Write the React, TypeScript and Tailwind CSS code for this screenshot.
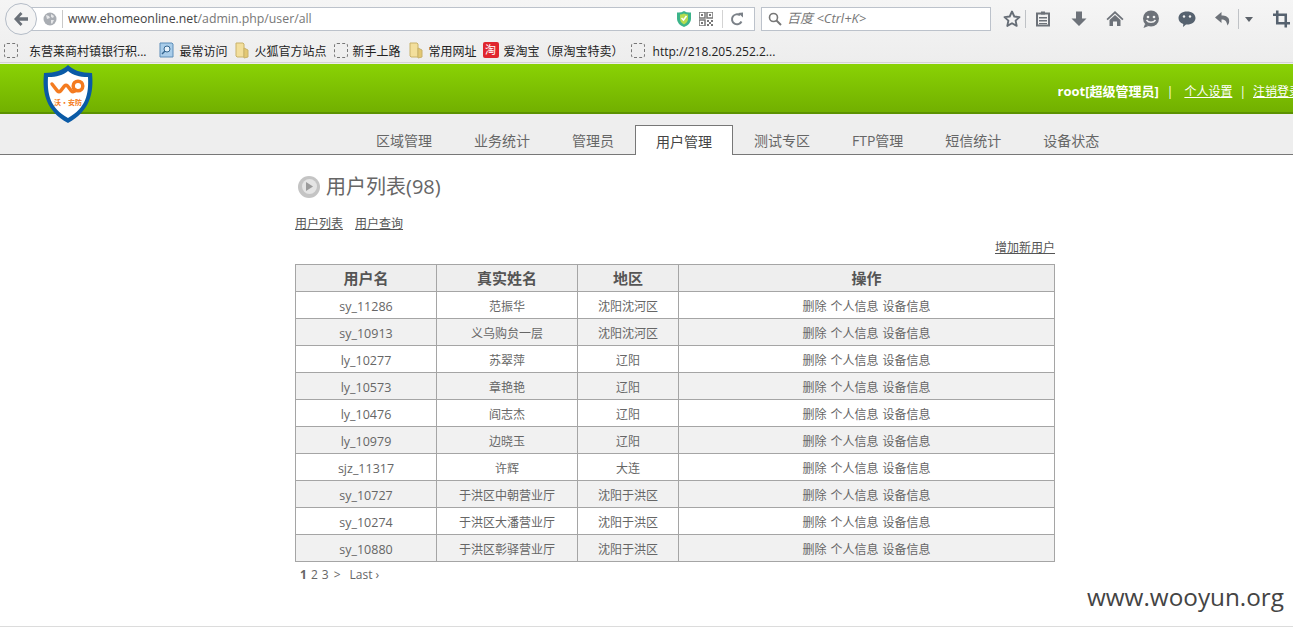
import React from "react";

const font = { fontFamily: '"Open Sans","Noto Sans CJK SC",sans-serif' };

const rows = [
  ["sy_11286", "范振华", "沈阳沈河区"],
  ["sy_10913", "义乌购贠一层", "沈阳沈河区"],
  ["ly_10277", "苏翠萍", "辽阳"],
  ["ly_10573", "章艳艳", "辽阳"],
  ["ly_10476", "阎志杰", "辽阳"],
  ["ly_10979", "边晓玉", "辽阳"],
  ["sjz_11317", "许辉", "大连"],
  ["sy_10727", "于洪区中朝营业厅", "沈阳于洪区"],
  ["sy_10274", "于洪区大潘营业厅", "沈阳于洪区"],
  ["sy_10880", "于洪区彰驿营业厅", "沈阳于洪区"],
];

const tabs = ["区域管理", "业务统计", "管理员", "用户管理", "测试专区", "FTP管理", "短信统计", "设备状态"];

function Dashed() {
  return <span className="inline-block w-[14px] h-[15px] rounded-[3px] border border-dashed border-[#777] shrink-0" />;
}

function Folder() {
  return (
    <svg width="16" height="17" viewBox="0 0 16 17" className="shrink-0">
      <path d="M2 1h7l1 1v13H3l-1-1z" fill="#f3df9c" stroke="#c9b26a" />
      <path d="M10 6l4 2v7l-4 1z" fill="#e3c873" stroke="#c9b26a" />
    </svg>
  );
}

function Bookmark({ icon, label, className }: { icon: React.ReactNode; label: string; className: string }) {
  return (
    <span className={`flex items-center shrink-0 ${className}`}>
      {icon}
      <span className="whitespace-nowrap mt-[3px]">{label}</span>
    </span>
  );
}

function ToolIcon({ children, w = 20 }: { children: React.ReactNode; w?: number }) {
  return (
    <svg width={w} height="20" viewBox="0 0 20 20" className="shrink-0">
      {children}
    </svg>
  );
}

function Toolbar() {
  return (
    <div className="h-[38px] flex items-center pl-[5px]">
      <div className="relative z-10 w-[32px] h-[32px] rounded-full border border-[#b4bcc7] bg-[#f4f4f4] flex items-center justify-center shrink-0">
        <svg width="18" height="16" viewBox="0 0 18 16">
          <path d="M8.5 1L2 8l6.500 7 2-2-3.200-3.300H16V6.300H7.300L10.500 3z" fill="#6a7078" />
        </svg>
      </div>
      <div className="-ml-[6px] w-[724px] h-[24px] bg-white border border-[#bcc2cb] flex items-center shrink-0">
        <svg width="14" height="14" viewBox="0 0 14 14" className="ml-[11px] shrink-0">
          <circle cx="7" cy="7" r="6.500" fill="#a9adb3" />
          <path d="M3 3l3 1 1 2-3 1zM8 2l3 2-1 2-2-1zM8 8l3 0-2 4-1-1z" fill="#e6e7e9" />
        </svg>
        <span className="ml-[5px] w-px h-[18px] bg-[#c9c9c9] shrink-0" />
        <span className="ml-[5px] text-[12.300px] text-[#777]" style={font}>
          <span className="text-[#444]">www.ehomeonline.net</span>/admin.php/user/all
        </span>
        <span className="ml-auto flex items-center">
          <svg width="14" height="16" viewBox="0 0 14 16">
            <path d="M0 1.500Q4 2 7 0q3 2 7 1.500V8q0 5-7 8Q0 13 0 8z" fill="#3cb48a" />
            <path d="M3 3.500Q5 3.500 7 2.500q2 1 4 1V8q0 3-4 5.500Q3 11 3 8z" fill="#b5dc4e" />
            <path d="M4.500 7l2 2 3-4" stroke="#fff" strokeWidth="1.500" fill="none" />
          </svg>
          <svg width="14" height="14" viewBox="0 0 14 14" className="ml-[8px]">
            <path d="M0 0h6v6H0zM8 0h6v6H8zM0 8h6v6H0z" fill="none" stroke="#777" strokeWidth="1.500" />
            <path d="M2 2h2v2H2zM10 2h2v2h-2zM2 10h2v2H2zM8 8h2v2H8zM12 8h2v2h-2zM10 10h2v2h-2zM8 12h2v2H8zM12 12h2v2h-2z" fill="#777" />
          </svg>
          <span className="ml-[9px] w-px h-[18px] bg-[#d3d3d3]" />
          <svg width="14" height="14" viewBox="0 0 14 14" className="ml-[7px] mr-[10px]">
            <path d="M11.500 9.500A5 5 0 1 1 10 3.300" fill="none" stroke="#7b8188" strokeWidth="2" />
            <path d="M8 1l5-.500v5z" fill="#7b8188" />
          </svg>
        </span>
      </div>
      <div className="ml-[6px] w-[230px] h-[24px] bg-white border border-[#bcc2cb] flex items-center shrink-0">
        <svg width="14" height="14" viewBox="0 0 14 14" className="ml-[6px]">
          <circle cx="5.500" cy="5.500" r="4" fill="none" stroke="#777" strokeWidth="1.600" />
          <path d="M8.500 8.500L13 13" stroke="#777" strokeWidth="2" />
        </svg>
        <span className="ml-[5px] text-[13px] italic text-[#777] whitespace-nowrap" style={font}>百度 &lt;Ctrl+K&gt;</span>
      </div>
      <div className="ml-[11px] flex items-center">
        <ToolIcon>
          <path d="M10 2.500l2.300 5 5.200.600-3.900 3.500 1.100 5.300L10 14.200l-4.700 2.700 1.100-5.300L2.500 8.100l5.200-.600z" fill="none" stroke="#666d76" strokeWidth="1.900" strokeLinejoin="round" />
        </ToolIcon>
        <span className="ml-[3px] w-px h-[18px] bg-[#bfc2c6]" />
        <span className="ml-[7px]">
          <ToolIcon>
            <path d="M4 4.500h12v12H4z" fill="none" stroke="#6d7279" strokeWidth="2" />
            <path d="M8 2.500h4v3H8zM6 8h8v1.400H6zM6 11h8v1.400H6zM6 14h8v1H6z" fill="#6d7279" />
          </ToolIcon>
        </span>
        <span className="ml-[16px]">
          <ToolIcon>
            <path d="M7 2.500h6v7h4.500L10 17 2.500 9.500H7z" fill="#6d7279" />
          </ToolIcon>
        </span>
        <span className="ml-[16px]">
          <ToolIcon>
            <path d="M10 2L1.500 10l1.200 1.200L10 4.600l7.300 6.600 1.200-1.200z" fill="#6d7279" />
            <path d="M4.500 11L10 6l5.500 5v6H12v-4.500H8V17H4.500z" fill="#6d7279" />
          </ToolIcon>
        </span>
        <span className="ml-[16px]">
          <ToolIcon>
            <circle cx="10" cy="9.500" r="8" fill="#6d7279" />
            <path d="M4 15l-1.500 4 5-2z" fill="#6d7279" />
            <circle cx="7" cy="8" r="1.300" fill="#f0f0f0" />
            <circle cx="13" cy="8" r="1.300" fill="#f0f0f0" />
            <path d="M5.500 11c2 3 7 3 9 0" stroke="#f0f0f0" strokeWidth="1.500" fill="none" />
          </ToolIcon>
        </span>
        <span className="ml-[16px]">
          <ToolIcon>
            <path d="M10 2.500c5 0 8.500 2.700 8.500 6.500s-3.500 6.500-8.500 6.500l-1-.1L6 18l.3-3.100C3.300 14 1.500 11.800 1.500 9c0-3.800 3.500-6.500 8.500-6.500z" fill="#56626f" />
            <circle cx="7" cy="7.500" r="1.200" fill="#f0f0f0" />
            <circle cx="13" cy="7.500" r="1.200" fill="#f0f0f0" />
          </ToolIcon>
        </span>
        <span className="ml-[16px]">
          <ToolIcon>
            <path d="M8.500 3L2 8.500 8.500 14v-3.500c3.500 0 5 1.500 6 6 1.500-2 2-3.500 1.500-6-.6-2.500-3.500-4-7.500-4z" fill="#6d7279" />
          </ToolIcon>
        </span>
        <span className="ml-[5px] w-px h-[20px] bg-[#bfc2c6]" />
        <svg width="8" height="5" viewBox="0 0 8 5" className="ml-[6px]">
          <path d="M0 0h8L4 5z" fill="#5d636b" />
        </svg>
        <span className="ml-[20px]">
          <ToolIcon w={17}>
            <path d="M5 0v15h15M0 5h15v15" fill="none" stroke="#56626f" strokeWidth="3" />
          </ToolIcon>
        </span>
      </div>
    </div>
  );
}

function Bookmarks() {
  return (
    <div className="h-[25px] flex items-center pl-[4px] text-[12px] text-[#222] border-b border-[#d4d4d4]" style={font}>
      <Dashed />
      <span className="ml-[11px] whitespace-nowrap shrink-0 mt-[3px]">东营莱商村镇银行积...</span>
      <Bookmark
        className="ml-[13px] gap-[5px]"
        label="最常访问"
        icon={
          <svg width="15" height="16" viewBox="0 0 15 16">
            <path d="M1 1h12l1 1v13H1z" fill="#a9cdea" stroke="#5d8db8" />
            <circle cx="8" cy="7" r="3" fill="#e7f2fb" stroke="#34668f" />
            <path d="M6 9l-3 3" stroke="#34668f" strokeWidth="1.500" />
          </svg>
        }
      />
      <Bookmark className="ml-[7px] gap-[4px]" label="火狐官方站点" icon={<Folder />} />
      <Bookmark className="ml-[7px] gap-[5px]" label="新手上路" icon={<Dashed />} />
      <Bookmark className="ml-[7px] gap-[5px]" label="常用网址" icon={<Folder />} />
      <Bookmark
        className="ml-[6px] gap-[5px]"
        label="爱淘宝（原淘宝特卖）"
        icon={<span className="w-[16px] h-[16px] rounded-[2px] bg-[#e0262e] text-white text-[11px] leading-[16px] text-center shrink-0">淘</span>}
      />
      <Bookmark className="ml-[7px] gap-[8px]" label="http://218.205.252.2..." icon={<Dashed />} />
    </div>
  );
}

function Logo() {
  return (
    <svg width="52" height="60" viewBox="0 0 52 60" className="absolute left-[42px] top-[64px] z-10">
      <path d="M26 1c5 5 13 8 24 8 2 20-2 38-24 50C4 47 0 29 2 9c11 0 19-3 24-8z" fill="#0a5aa6" />
      <path d="M26 7c5 4 11 6 20 6 1 17-2 31-20 41C8 44 5 30 6 13c9 0 15-2 20-6z" fill="#fff" />
      <path d="M10 20l5.500 7c1 1 2 1 3 0l4-5c1-1 2-1 3 0l4 5c1 1 3 1 4-1" fill="none" stroke="#f47b20" strokeWidth="3.500" strokeLinecap="round" />
      <circle cx="36" cy="22" r="4.800" fill="none" stroke="#f47b20" strokeWidth="3.500" />
      <text x="26" y="41" textAnchor="middle" fontSize="7" fontWeight="700" fill="#f47b20" fontFamily='"Noto Sans CJK SC",sans-serif'>沃·安防</text>
    </svg>
  );
}

function Header() {
  return (
    <div className="h-[50px] flex items-center justify-end bg-gradient-to-b from-[#8ad205] to-[#72b000] border-b-2 border-[#5c9200] overflow-hidden text-white text-[12px] whitespace-nowrap" style={font}>
      <div className="flex items-center -mr-[8px] mt-[8px]">
        <span className="font-bold text-[13px]">root[超级管理员]</span>
        <span className="ml-[8px]">|</span>
        <span className="ml-[11px] underline">个人设置</span>
        <span className="ml-[7px]">|</span>
        <span className="ml-[7px] underline">注销登录</span>
      </div>
    </div>
  );
}

function Nav() {
  return (
    <div className="h-[41px] bg-[#eeeeee] border-b border-[#777] flex items-end pl-[355px] text-[14px] text-[#666]" style={font}>
      {tabs.map((t) => (
        <span
          key={t}
          className={
            t === "用户管理"
              ? "h-[30px] px-[20px] pt-[2px] flex items-center bg-white border border-b-0 border-[#777] text-[#444] -mb-px whitespace-nowrap"
              : "h-[29px] px-[21px] pt-[2px] flex items-center whitespace-nowrap"
          }
        >
          {t}
        </span>
      ))}
    </div>
  );
}

function UserTable() {
  const c = "border border-[#a5a5a5] text-center font-normal p-0";
  const d = `${c} pt-[4px]`;
  return (
    <table className="w-[760px] table-fixed border-collapse text-[12px] text-[#666]" style={font}>
      <colgroup>
        <col className="w-[141px]" />
        <col className="w-[141px]" />
        <col className="w-[101px]" />
        <col />
      </colgroup>
      <thead>
        <tr className="h-[27px] bg-[#eeeeee] text-[15px] text-[#555]">
          {["用户名", "真实姓名", "地区", "操作"].map((h) => (
            <th key={h} className={`${c} font-semibold`}>{h}</th>
          ))}
        </tr>
      </thead>
      <tbody>
        {rows.map((r, i) => (
          <tr key={r[0]} className={`h-[27px] ${i % 2 ? "bg-[#f1f1f1]" : "bg-white"}`}>
            <td className={`${d} text-[12.500px]`}>{r[0]}</td>
            <td className={d}>{r[1]}</td>
            <td className={d}>{r[2]}</td>
            <td className={`${d} [word-spacing:1px]`}>删除 个人信息 设备信息</td>
          </tr>
        ))}
      </tbody>
    </table>
  );
}

function Content() {
  return (
    <div className="w-[760px] ml-[295px] text-[12px] text-[#555]" style={font}>
      <div className="h-[64px] flex items-center">
        <span className="w-[22px] h-[22px] rounded-full bg-[#c4c4c4] flex items-center justify-center ml-[3px] mt-[-1px]">
          <span className="w-[15px] h-[15px] rounded-full bg-[#e4e4e4] flex items-center justify-center">
            <svg width="8" height="9" viewBox="0 0 8 9"><path d="M1 0l7 4.500L1 9z" fill="#9a9a9a" /></svg>
          </span>
        </span>
        <span className="ml-[6px] text-[20px] text-[#666]">用户列表(98)</span>
      </div>
      <div className="h-[16px] flex items-center gap-[12px] leading-none underline mt-[-3px]">
        <span>用户列表</span>
        <span>用户查询</span>
      </div>
      <div className="h-[16px] mt-[8px] flex items-center justify-end underline">增加新用户</div>
      <div className="mt-[8px]">
        <UserTable />
      </div>
      <div className="h-[26px] flex items-center pl-[5px] text-[12px] text-[#666] whitespace-nowrap">
        <b className="font-bold">1</b>
        <span className="ml-[4px]">2</span>
        <span className="ml-[4px]">3</span>
        <span className="ml-[5px]">&gt;</span>
        <span className="ml-[9px]">Last ›</span>
      </div>
    </div>
  );
}

export default function App() {
  return (
    <div className="relative w-[1293px] h-[627px] overflow-hidden bg-white">
      <div className="h-[64px] bg-gradient-to-b from-[#f5f5f5] to-[#ededed]">
        <Toolbar />
        <Bookmarks />
      </div>
      <Header />
      <Nav />
      <Content />
      <Logo />
      <div className="absolute left-0 right-0 bottom-0 h-px bg-[#dcdcdc]" />
      <div className="absolute right-[9px] top-[580px] text-[24.300px] leading-[34px] text-[#444]" style={{ fontFamily: '"Open Sans",sans-serif' }}>www.wooyun.org</div>
    </div>
  );
}
